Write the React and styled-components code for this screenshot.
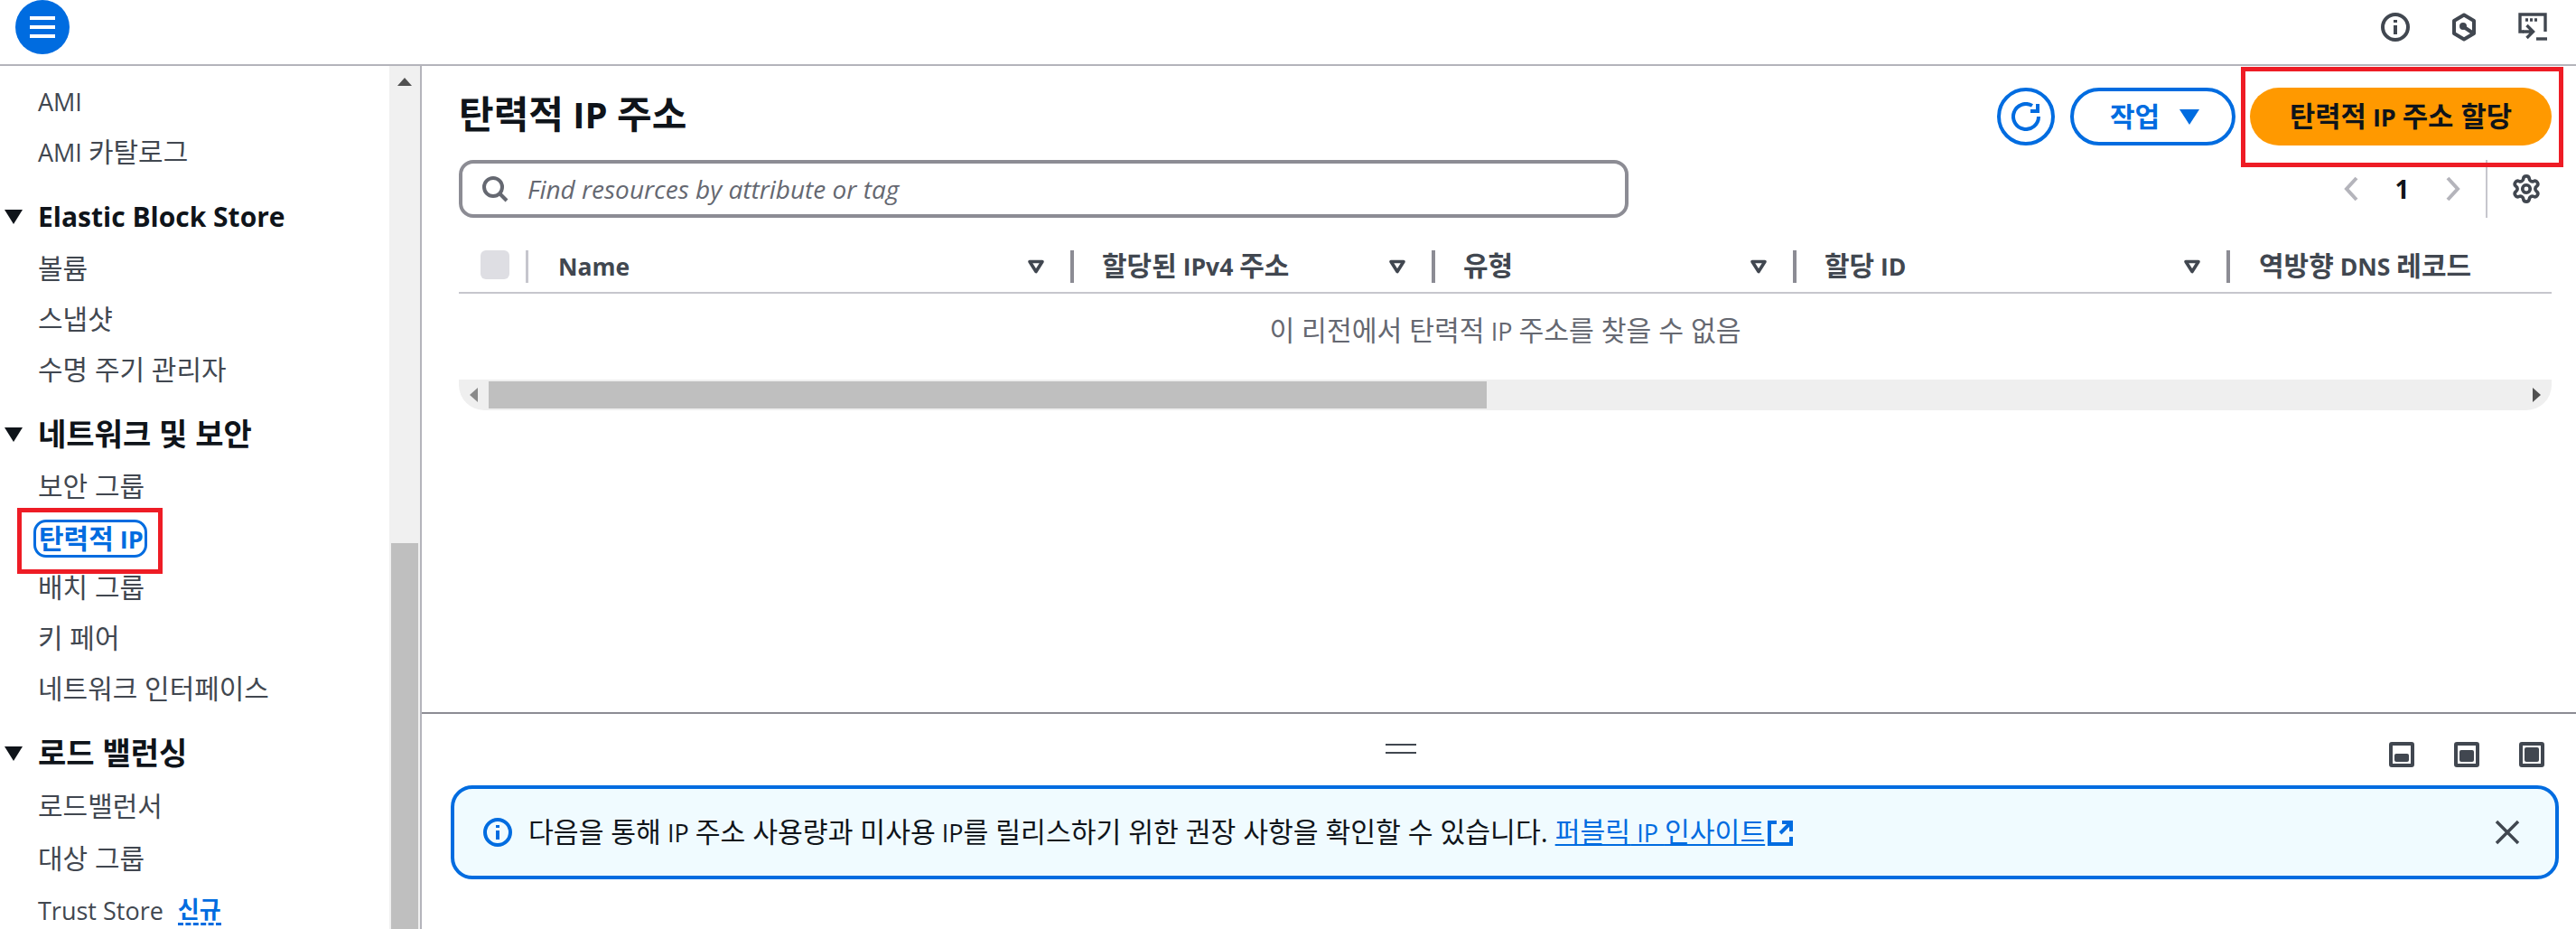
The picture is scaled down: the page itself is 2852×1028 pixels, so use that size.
import React from 'react';
import styled, { createGlobalStyle } from 'styled-components';
import { Settings } from 'lucide-react';

const GlobalStyle = createGlobalStyle`
  html, body {
    margin: 0;
    padding: 0;
    height: 100%;
    overflow: hidden;
    background: #ffffff;
  }

  body {
    font-family: "Open Sans", "Noto Sans CJK KR", sans-serif;
    font-size: 27px;
    color: #0f141a;
  }

  * {
    box-sizing: border-box;
  }
`;

const Page = styled.div`
  width: 2852px;
  height: 1028px;
  display: flex;
  flex-direction: column;
  overflow: hidden;
`;

// hangul sits a bit larger than the latin text around it
const Ko = styled.span`
  font-size: ${(p) => p.$scale}em;
  line-height: 1;
`;

const TopBar = styled.header`
  height: 73px;
  flex: none;
  display: flex;
  align-items: flex-start;
  justify-content: space-between;
  padding-left: 17px;
  padding-right: 32px;
  border-bottom: 2px solid #b4b4bb;
`;

const MenuButton = styled.button`
  width: 60px;
  height: 60px;
  border: 0;
  padding: 0;
  border-radius: 50%;
  background: #006ce0;
  display: flex;
  align-items: center;
  justify-content: center;
`;

const TopIcons = styled.div`
  display: flex;
  gap: 44px;
  padding-top: 14px;
  color: #414750;

  svg {
    display: block;
  }
`;

const Body = styled.div`
  flex: 1;
  display: flex;
  min-height: 0;
`;

const Sidebar = styled.nav`
  width: 467px;
  flex: none;
  display: flex;
  border-right: 2px solid #b4b4bb;
`;

const NavList = styled.div`
  flex: 1;
  padding-top: 11px;
  min-width: 0;
`;

const NavRow = styled.div`
  height: 56px;
  display: flex;
  align-items: center;
  padding-left: 42px;
  color: #414750;
  white-space: nowrap;
`;

const LooseRow = styled(NavRow)`
  height: 58px;
`;

const NavHeading = styled(NavRow)`
  position: relative;
  margin-top: 15px;
  margin-bottom: 2px;
  font-size: 30px;
  font-weight: 700;
  color: #0f141a;
`;

const Caret = styled.span`
  position: absolute;
  left: 5px;
  top: 21px;
  width: 0;
  height: 0;
  border-left: 10px solid transparent;
  border-right: 10px solid transparent;
  border-top: 16px solid #0f141a;
`;

const ActiveLink = styled.span`
  position: relative;
  display: inline-flex;
  align-items: center;
  gap: 7px;
  width: 126px;
  height: 42px;
  margin-top: 4px;
  margin-left: -5px;
  padding: 0 0 0 3px;
  border: 3px solid #006ce0;
  border-radius: 14px;
  color: #006ce0;
  font-weight: 700;
`;

const NewBadge = styled.span`
  margin-left: 16px;
  color: #006ce0;
  font-weight: 700;
  font-size: 26px;
  border-bottom: 3px dashed #006ce0;
  line-height: 30px;
`;

const RedBox = styled.span`
  position: absolute;
  inset: ${(p) => p.$inset};
  border: 5px solid #ee1c25;
  pointer-events: none;
`;

const VScroll = styled.div`
  width: 34px;
  flex: none;
  background: #f0f0f0;
  display: flex;
  flex-direction: column;
  align-items: center;
  padding-top: 13px;
`;

const ArrowUp = styled.span`
  width: 0;
  height: 0;
  border-left: 8px solid transparent;
  border-right: 8px solid transparent;
  border-bottom: 9px solid #505050;
`;

const VThumb = styled.div`
  width: 30px;
  flex: 1;
  margin-top: 506px;
  background: #bfbfbf;
`;

const Main = styled.main`
  flex: 1;
  min-width: 0;
  display: flex;
  flex-direction: column;
`;

const TopPane = styled.section`
  height: 717px;
  flex: none;
  padding: 24px 27px 0 41px;
  border-bottom: 2px solid #8c8c94;
`;

const TitleRow = styled.div`
  height: 64px;
  display: flex;
  align-items: center;
  justify-content: space-between;
`;

const Title = styled.h1`
  margin: 0 0 5px;
  font-size: 40px;
  font-weight: 700;
  line-height: 59px;
`;

const Actions = styled.div`
  display: flex;
  align-items: center;
`;

const RefreshButton = styled.button`
  width: 64px;
  height: 64px;
  padding: 0;
  margin-right: 17px;
  border: 4px solid #006ce0;
  border-radius: 50%;
  background: #ffffff;
  display: flex;
  align-items: center;
  justify-content: center;
`;

const OutlineButton = styled.button`
  width: 183px;
  height: 64px;
  padding: 0 0 0 40px;
  margin-right: 16px;
  border: 4px solid #006ce0;
  border-radius: 32px;
  background: #ffffff;
  color: #006ce0;
  font: inherit;
  font-weight: 700;
  display: flex;
  align-items: center;
  gap: 22px;
`;

const ButtonCaret = styled.span`
  width: 0;
  height: 0;
  border-left: 11px solid transparent;
  border-right: 11px solid transparent;
  border-top: 17px solid #006ce0;
`;

const PrimaryButton = styled.button`
  position: relative;
  width: 334px;
  height: 64px;
  padding: 0;
  border: 0;
  border-radius: 32px;
  background: #ff9900;
  color: #0f141a;
  font: inherit;
  font-weight: 700;
`;

const FilterRow = styled.div`
  margin-top: 16px;
  height: 64px;
  display: flex;
  align-items: center;
  justify-content: space-between;
`;

const SearchBox = styled.div`
  width: 1295px;
  height: 64px;
  padding-left: 21px;
  border: 4px solid #8c8c94;
  border-radius: 16px;
  display: flex;
  align-items: center;
  gap: 21px;
`;

const Placeholder = styled.span`
  font-size: 28px;
  font-style: italic;
  color: #656871;
`;

const Pager = styled.div`
  height: 64px;
  display: flex;
  align-items: center;
  padding-right: 11px;
  color: #b4b4bb;
`;

const PageNumber = styled.span`
  width: 95px;
  text-align: center;
  font-size: 28px;
  font-weight: 700;
  color: #0f141a;
`;

const PagerDivider = styled.span`
  width: 2px;
  height: 64px;
  margin: 0 26px 0 27px;
  background: #c6c6cd;
`;

const HeaderRow = styled.div`
  margin-top: 36px;
  height: 48px;
  display: grid;
  grid-template-columns: 79px 602px 400px 400px 480px 1fr;
  border-bottom: 2px solid #c6c6cd;
`;

const CheckCell = styled.div`
  height: 36px;
  padding-left: 24px;
  display: flex;
  justify-content: space-between;
  align-items: flex-start;
`;

const CheckBox = styled.span`
  width: 32px;
  height: 32px;
  border-radius: 6px;
  background: #dedee3;
`;

const CheckDivider = styled.span`
  width: 3px;
  height: 36px;
  margin-right: 2px;
  background: #c6c6cd;
`;

const HeadCell = styled.div`
  height: 36px;
  padding-left: ${(p) => (p.$last ? 32 : 31)}px;
  display: flex;
  align-items: center;
  font-size: 26.5px;
  font-weight: 700;
  color: #414750;
  white-space: pre;
`;

const SortIcon = styled.svg`
  margin-left: auto;
  flex: none;
`;

const HeadDivider = styled.span`
  width: 4px;
  height: 36px;
  margin-left: 28px;
  background: #8c8c94;
  flex: none;
`;

const EmptyRow = styled.div`
  height: 95px;
  padding-bottom: 12px;
  display: flex;
  align-items: center;
  justify-content: center;
  color: #656871;
  white-space: pre;
`;

const HScroll = styled.div`
  height: 34px;
  display: flex;
  align-items: center;
  padding-left: 12px;
  background: #efefef;
  border-radius: 0 0 28px 28px;
`;

const HThumb = styled.div`
  width: 1105px;
  height: 30px;
  background: #bfbfbf;
`;

const ArrowLeft = styled.span`
  width: 0;
  height: 0;
  margin-right: 12px;
  border-top: 8px solid transparent;
  border-bottom: 8px solid transparent;
  border-right: 9px solid #8a8a8a;
`;

const ArrowRight = styled.span`
  width: 0;
  height: 0;
  margin-left: auto;
  margin-right: 12px;
  border-top: 8px solid transparent;
  border-bottom: 8px solid transparent;
  border-left: 9px solid #505050;
`;

const BottomPane = styled.section`
  flex: 1;
  min-height: 0;
  padding: 31px 19px 0 32px;
`;

const SplitRow = styled.div`
  height: 28px;
  display: flex;
  justify-content: space-between;
  padding: 0 16px 0 1035px;
`;

const DragHandle = styled.span`
  width: 34px;
  height: 11px;
  margin-top: 2px;
  border-top: 2px solid #414750;
  border-bottom: 2px solid #414750;
`;

const SplitIcons = styled.div`
  display: flex;
  gap: 44px;
  color: #414750;

  svg {
    display: block;
  }
`;

const Banner = styled.div`
  margin-top: 20px;
  height: 104px;
  display: flex;
  align-items: center;
  padding: 0 39px 0 32px;
  border: 4px solid #006ce0;
  border-radius: 24px;
  background: #f0fbff;
`;

const BannerIcon = styled.svg`
  flex: none;
`;

const BannerText = styled.span`
  margin-left: 18px;
  white-space: pre;
`;

const BannerLink = styled.a`
  margin-left: 8px;
  color: #006ce0;
  text-decoration: underline;
`;

const ExternalIcon = styled.svg`
  margin-left: 3px;
  vertical-align: -4px;
`;

const CloseIcon = styled.svg`
  margin-left: auto;
  flex: none;
`;

const columns = ['Name', '할당된 IPv4 주소', '유형', '할당 ID'];

// wraps the hangul runs of a string so they get their own size
const Mixed = ({ text, scale = 1.11 }) =>
  text.split(/([가-힣.]+(?:\s+[가-힣.]+)*)/).map((part, i) =>
    i % 2 ? <Ko key={i} $scale={scale}>{part}</Ko> : part
  );

const InfoIcon = () => (
  <svg width="32" height="32" viewBox="0 0 32 32" fill="none" stroke="currentColor" strokeWidth="4">
    <circle cx="16" cy="16" r="14" />
    <path d="M16 14v10M16 8v3" />
  </svg>
);

const Sort = () => (
  <SortIcon width="20" height="17" viewBox="0 0 20 17" fill="none" stroke="#414750" strokeWidth="3.6">
    <path d="M3 2.500h14L10 13.500z" strokeLinejoin="round" />
  </SortIcon>
);

const SplitIcon = ({ top }) => (
  <svg width="28" height="28" viewBox="0 0 28 28">
    <rect x="2" y="2" width="24" height="24" rx="1" fill="none" stroke="currentColor" strokeWidth="4" />
    <rect x="6" y={top} width="16" height={22 - top} rx="2" fill="currentColor" />
  </svg>
);

export default function App() {
  return (
    <Page>
      <GlobalStyle />
      <TopBar>
        <MenuButton aria-label="menu">
          <svg width="28" height="24" viewBox="0 0 28 24" fill="#ffffff">
            <rect y="0" width="28" height="4" />
            <rect y="10" width="28" height="4" />
            <rect y="20" width="28" height="4" />
          </svg>
        </MenuButton>
        <TopIcons>
          <InfoIcon />
          <svg width="32" height="32" viewBox="0 0 32 32" fill="none" stroke="currentColor" strokeWidth="4">
            <path d="M16 2.500l11 6.500v14l-11 6.500-11-6.500v-14z" strokeLinejoin="round" />
            <circle cx="15" cy="15" r="3" fill="currentColor" strokeWidth="2" />
            <path d="M16 16l9 6" />
          </svg>
          <svg width="32" height="32" viewBox="0 0 32 32" fill="none" stroke="currentColor" strokeWidth="3.4">
            <path d="M6 21H2V2h28v19" />
            <path d="M8 8h3M13 8h3M18 8h3" />
            <path d="M5 21h12M9.500 14l7 7-7 7" />
            <path d="M20 29h12" />
          </svg>
        </TopIcons>
      </TopBar>
      <Body>
        <Sidebar>
          <NavList>
            <NavRow>AMI</NavRow>
            <NavRow><span><Mixed text="AMI 카탈로그" /></span></NavRow>
            <NavHeading><Caret />Elastic Block Store</NavHeading>
            <NavRow><Mixed text="볼륨" /></NavRow>
            <NavRow><Mixed text="스냅샷" /></NavRow>
            <NavRow><Mixed text="수명 주기 관리자" /></NavRow>
            <NavHeading><Caret /><Mixed text="네트워크 및 보안" scale={1.134} /></NavHeading>
            <NavRow><Mixed text="보안 그룹" /></NavRow>
            <NavRow>
              <ActiveLink>
                <Ko $scale={1.11}>탄력적</Ko>
                <span>IP</span>
                <RedBox $inset="-16px -20px -21px -21px" />
              </ActiveLink>
            </NavRow>
            <NavRow><Mixed text="배치 그룹" /></NavRow>
            <NavRow><Mixed text="키 페어" /></NavRow>
            <NavRow><Mixed text="네트워크 인터페이스" /></NavRow>
            <NavHeading><Caret /><Mixed text="로드 밸런싱" scale={1.134} /></NavHeading>
            <LooseRow><Mixed text="로드밸런서" /></LooseRow>
            <LooseRow><Mixed text="대상 그룹" /></LooseRow>
            <NavRow>Trust Store<NewBadge>신규</NewBadge></NavRow>
          </NavList>
          <VScroll>
            <ArrowUp />
            <VThumb />
          </VScroll>
        </Sidebar>
        <Main>
          <TopPane>
            <TitleRow>
              <Title><Mixed text="탄력적 IP 주소" scale={1.05} /></Title>
              <Actions>
                <RefreshButton aria-label="refresh">
                  <svg width="32" height="32" viewBox="0 0 16 16" fill="none" stroke="#006ce0" strokeWidth="2">
                    <path d="M15 8a7 7 0 1 1-3.500-6.060" />
                    <path d="M14.500 1v4h-4" />
                  </svg>
                </RefreshButton>
                <OutlineButton><Mixed text="작업" /><ButtonCaret /></OutlineButton>
                <PrimaryButton>
                  <Mixed text="탄력적 IP 주소 할당" scale={1.14} />
                  <RedBox $inset="-23px -13px -24px -10px" />
                </PrimaryButton>
              </Actions>
            </TitleRow>
            <FilterRow>
              <SearchBox>
                <svg width="30" height="30" viewBox="0 0 30 30" fill="none" stroke="#656871" strokeWidth="4">
                  <circle cx="13" cy="13" r="10" />
                  <path d="M20 20l8 8" />
                </svg>
                <Placeholder>Find resources by attribute or tag</Placeholder>
              </SearchBox>
              <Pager>
                <svg width="18" height="28" viewBox="0 0 18 28" fill="none" stroke="currentColor" strokeWidth="4">
                  <path d="M15 2L4 14l11 12" />
                </svg>
                <PageNumber>1</PageNumber>
                <svg width="18" height="28" viewBox="0 0 18 28" fill="none" stroke="currentColor" strokeWidth="4">
                  <path d="M3 2l11 12L3 26" />
                </svg>
                <PagerDivider />
                <Settings size={34} color="#414750" strokeWidth={2.6} />
              </Pager>
            </FilterRow>
            <HeaderRow>
              <CheckCell>
                <CheckBox />
                <CheckDivider />
              </CheckCell>
              {columns.map((label) => (
                <HeadCell key={label}>
                  <span><Mixed text={label} scale={1.132} /></span>
                  <Sort />
                  <HeadDivider />
                </HeadCell>
              ))}
              <HeadCell $last><span><Mixed text="역방향 DNS 레코드" scale={1.132} /></span></HeadCell>
            </HeaderRow>
            <EmptyRow><span><Mixed text="이 리전에서 탄력적 IP 주소를 찾을 수 없음" scale={1.12} /></span></EmptyRow>
            <HScroll>
              <ArrowLeft />
              <HThumb />
              <ArrowRight />
            </HScroll>
          </TopPane>
          <BottomPane>
            <SplitRow>
              <DragHandle />
              <SplitIcons>
                <SplitIcon top={13} />
                <SplitIcon top={9} />
                <SplitIcon top={6} />
              </SplitIcons>
            </SplitRow>
            <Banner>
              <BannerIcon width="32" height="32" viewBox="0 0 32 32" fill="none" stroke="#006ce0" strokeWidth="4">
                <circle cx="16" cy="16" r="14" />
                <path d="M16 14v10M16 8v3" />
              </BannerIcon>
              <BannerText>
                <Mixed text="다음을 통해 IP 주소 사용량과 미사용 IP를 릴리스하기 위한 권장 사항을 확인할 수 있습니다." scale={1.12} />
                <BannerLink><Mixed text="퍼블릭 IP 인사이트" scale={1.12} /></BannerLink>
                <ExternalIcon width="28" height="28" viewBox="0 0 28 28" fill="none" stroke="#006ce0" strokeWidth="4">
                  <path d="M10 2H2v24h24v-8M14 14L25 3M16 2h10v10" />
                </ExternalIcon>
              </BannerText>
              <CloseIcon width="28" height="28" viewBox="0 0 28 28" fill="none" stroke="#414750" strokeWidth="3.500">
                <path d="M2 2l24 24M26 2L2 26" />
              </CloseIcon>
            </Banner>
          </BottomPane>
        </Main>
      </Body>
    </Page>
  );
}
